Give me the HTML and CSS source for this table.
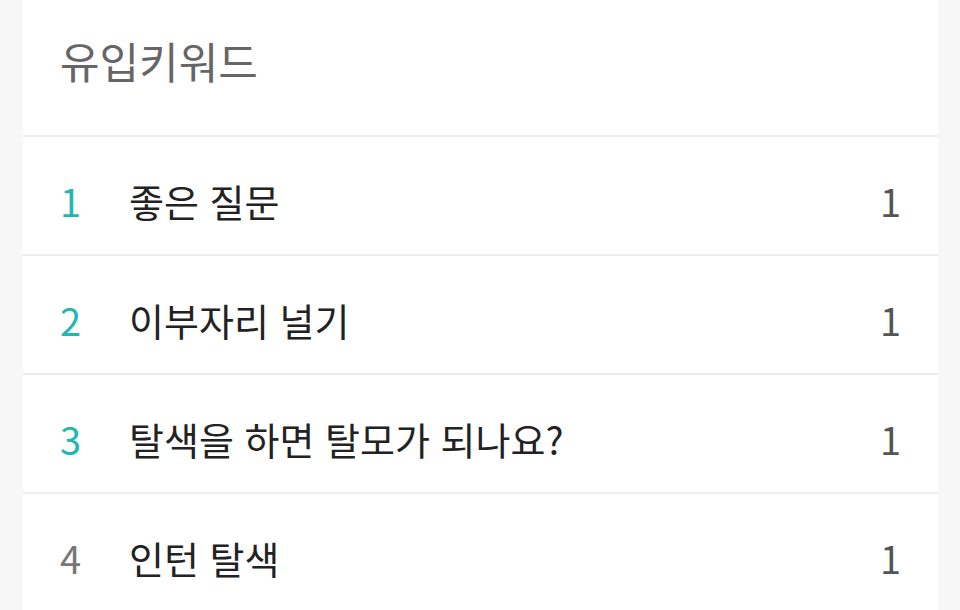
FILE: index.html
```html
<!DOCTYPE html>
<html lang="ko">
<head>
<meta charset="utf-8">
<link rel="stylesheet" href="styles.css">
</head>
<body>
<div class="page">
  <section class="card">
    <h2 class="title">유입키워드</h2>
    <ul class="list">
      <li class="row"><span class="rank top">1</span><span class="kw">좋은 질문</span><span class="count">1</span></li>
      <li class="row"><span class="rank top">2</span><span class="kw">이부자리 널기</span><span class="count">1</span></li>
      <li class="row"><span class="rank top">3</span><span class="kw">탈색을 하면 탈모가 되나요?</span><span class="count">1</span></li>
      <li class="row"><span class="rank">4</span><span class="kw">인턴 탈색</span><span class="count">1</span></li>
    </ul>
  </section>
</div>
</body>
</html>
```

FILE: styles.css
```css
html, body {
  margin: 0;
  padding: 0;
  background: #f7f7f7;
  font-family: "Noto Sans CJK KR", "Noto Sans", sans-serif;
  height: 610px;
  overflow: hidden;
}
.page {
  padding: 0 22px 0 23px;
}
.card {
  background: #ffffff;
}
.title {
  margin: 0;
  height: 137px;
  box-sizing: border-box;
  padding: 28px 0 0 37px;
  font-size: 43px;
  font-weight: 400;
  color: #666666;
  line-height: 64px;
  border-bottom: 2px solid #ececec;
}
.list {
  list-style: none;
  margin: 0;
  padding: 0;
}
.row {
  display: flex;
  align-items: center;
  height: 119px;
  padding: 10px 37px 0 37px;
  box-sizing: border-box;
  border-bottom: 2px solid #ececec;
  font-size: 38px;
  line-height: 52px;
}
.rank {
  width: 69px;
  color: #777777;
}
.rank.top {
  color: #1db8b0;
}
.kw {
  flex: 1;
  color: #222222;
}
.count {
  color: #555555;
}
```
